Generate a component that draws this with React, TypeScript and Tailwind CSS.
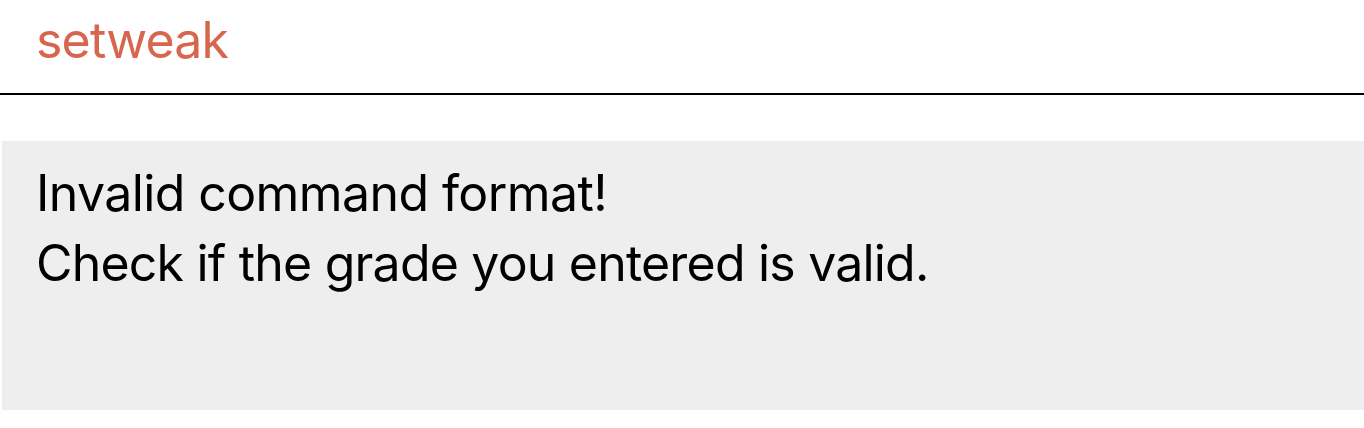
export default function App() {
  return (
    <div className="w-[1364px] h-[428px] bg-white" style={{ fontFamily: 'Inter, "Liberation Sans", Arial, sans-serif' }}>
      <div className="h-[95px] border-b-2 border-black pl-[36px] pt-[11px]">
        <div className="text-[50px] leading-[58px] tracking-[-0.8px] text-[#d8664f]">setweak</div>
      </div>
      <div className="mt-[46px] ml-[2px] h-[269px] bg-[#eeeeee] pl-[34px] pt-[17px]">
        <div className="text-[50px] leading-[70px] tracking-[-0.6px] text-black">Invalid command format!</div>
        <div className="text-[50px] leading-[70px] tracking-[-0.8px] text-black">Check if the grade you entered is valid.</div>
      </div>
    </div>
  );
}
